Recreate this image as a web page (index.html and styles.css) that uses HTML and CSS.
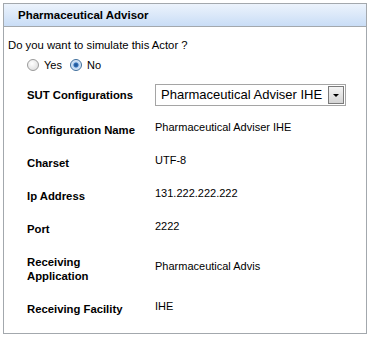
FILE: index.html
```html
<!DOCTYPE html>
<html lang="en">
<head>
    <meta charset="UTF-8">
    <title>Pharmaceutical Advisor</title>
    <link rel="stylesheet" href="styles.css">
</head>
<body>
    <div class="panel">
        <div class="panel-header">Pharmaceutical Advisor</div>
        <div class="panel-body">
            <p class="question">Do you want to simulate this Actor ?</p>
            <div class="radios">
                <label><input type="radio" name="sim"> Yes</label>
                <label><input type="radio" name="sim" checked> No</label>
            </div>
            <table class="config">
                <tr class="sut">
                    <th>SUT Configurations</th>
                    <td>
                        <div class="select">
                            <span class="select-text">Pharmaceutical Adviser IHE</span>
                            <span class="select-btn"><span class="caret"></span></span>
                        </div>
                    </td>
                </tr>
                <tr><th>Configuration Name</th><td>Pharmaceutical Adviser IHE</td></tr>
                <tr><th>Charset</th><td>UTF-8</td></tr>
                <tr><th>Ip Address</th><td>131.222.222.222</td></tr>
                <tr><th>Port</th><td>2222</td></tr>
                <tr><th>Receiving<br>Application</th><td>Pharmaceutical Advis</td></tr>
                <tr><th>Receiving Facility</th><td>IHE</td></tr>
            </table>
        </div>
    </div>
</body>
</html>
```

FILE: styles.css
```css
body {
    margin: 0;
    font-family: "Liberation Sans", Arial, sans-serif;
    font-size: 11px;
    color: #000;
    background: #fff;
}
.panel {
    margin: 3px;
    width: 362px;
    height: 329px;
    border: 1px solid #a3a8ad;
}
.panel-header {
    height: 22px;
    line-height: 22px;
    padding-left: 14px;
    font-size: 11.5px;
    font-weight: bold;
    background: linear-gradient(#ecf3fc, #c9ddf6);
    border-bottom: 1px solid #a3a8ad;
}
.panel-body {
    padding: 0 4px;
}
.question {
    margin: 11px 0 0 0;
    line-height: 14px;
    font-size: 11.3px;
}
.radios {
    display: flex;
    gap: 8px;
    margin: 6px 0 0 19px;
    line-height: 14px;
}
.radios label {
    display: flex;
    align-items: center;
    gap: 5px;
}
.radios input {
    appearance: none;
    margin: 0;
    width: 12px;
    height: 12px;
    border-radius: 50%;
    border: 1px solid #9a9a9a;
    background: radial-gradient(circle at 40% 35%, #fff, #d8d8d8);
}
.radios input:checked {
    border-color: #3e6e9c;
    background: radial-gradient(circle, #1d4f8a 0, #2f6db5 2px, #bcd6f2 3px, #eef5fc 6px);
}
.config {
    border-collapse: collapse;
    margin-left: 19px;
    margin-top: 6px;
}
.config th {
    text-align: left;
    font-size: 11.3px;
    font-weight: bold;
    width: 128px;
    padding: 11px 0 8px 0;
    line-height: 14px;
    vertical-align: middle;
}
.config td {
    padding: 8px 0 11px 0;
    line-height: 14px;
    vertical-align: middle;
}
.config .sut th,
.config .sut td {
    padding: 6px 0;
}
.select {
    display: flex;
    align-items: center;
    width: 189px;
    height: 20px;
    border: 1px solid #a5a5a5;
    font-size: 13px;
}
.select-text {
    flex: 1;
    padding-left: 5px;
    white-space: nowrap;
    overflow: hidden;
}
.select-btn {
    display: flex;
    align-items: center;
    justify-content: center;
    width: 14px;
    height: 16px;
    margin-right: 1px;
    border: 1px solid #7b7b7b;
    background: linear-gradient(#f4f4f4, #d4d4d4);
}
.caret {
    width: 0;
    height: 0;
    border-left: 3px solid transparent;
    border-right: 3px solid transparent;
    border-top: 3px solid #000;
}
```
